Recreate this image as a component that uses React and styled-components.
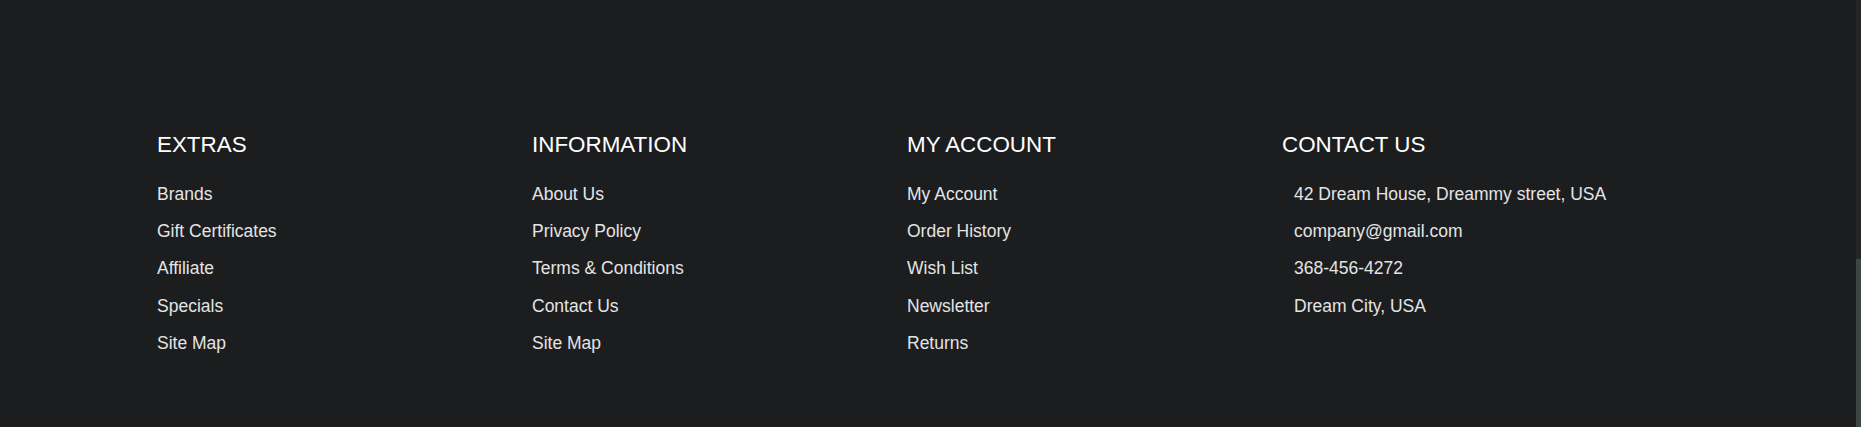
import styled, { createGlobalStyle } from "styled-components"

const GlobalStyle = createGlobalStyle`
  html, body {
    margin: 0;
    padding: 0;
    background: #1c1d1f;
    overflow: hidden;
  }
`

const Footer = styled.footer`
  height: 427px;
  box-sizing: border-box;
  padding: 132px 0 0 157px;
  background: #1c1d1f;
  font-family: "Liberation Sans", Arial, sans-serif;
`

const Columns = styled.div`
  display: grid;
  grid-template-columns: repeat(4, 375px);
`

const Title = styled.h4`
  margin: 0 0 22px;
  font-size: 22.4px;
  line-height: 1.2;
  font-weight: 400;
  color: #ffffff;
`

const List = styled.ul`
  list-style: none;
  margin: 0;
  padding: 0 0 0 ${(p) => (p.$indent ? "12px" : "0")};
`

const Item = styled.li`
  font-size: 17.5px;
  line-height: 26.25px;
  margin-bottom: 11px;
  color: #e4e4e4;
`

const Scrollbar = styled.div`
  position: fixed;
  top: 0;
  right: 0;
  width: 5px;
  height: 427px;
  background: #232527;
`

const Thumb = styled.div`
  position: absolute;
  left: 0;
  right: 0;
  top: 259px;
  bottom: 0;
  background: #3f4545;
`

const columns = [
  { title: "EXTRAS", items: ["Brands", "Gift Certificates", "Affiliate", "Specials", "Site Map"] },
  { title: "INFORMATION", items: ["About Us", "Privacy Policy", "Terms & Conditions", "Contact Us", "Site Map"] },
  { title: "MY ACCOUNT", items: ["My Account", "Order History", "Wish List", "Newsletter", "Returns"] },
  {
    title: "CONTACT US",
    indent: true,
    items: ["42 Dream House, Dreammy street, USA", "company@gmail.com", "368-456-4272", "Dream City, USA"],
  },
]

const App = () => {
  return (
    <>
      <GlobalStyle />
      <Footer>
        <Columns>
          {columns.map((col) => (
            <div key={col.title}>
              <Title>{col.title}</Title>
              <List $indent={col.indent}>
                {col.items.map((item) => (
                  <Item key={item}>{item}</Item>
                ))}
              </List>
            </div>
          ))}
        </Columns>
      </Footer>
      <Scrollbar>
        <Thumb />
      </Scrollbar>
    </>
  )
}

export default App
